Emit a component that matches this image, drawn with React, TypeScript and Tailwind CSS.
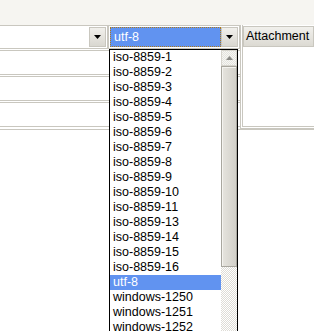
const charsets = [
  "iso-8859-1",
  "iso-8859-2",
  "iso-8859-3",
  "iso-8859-4",
  "iso-8859-5",
  "iso-8859-6",
  "iso-8859-7",
  "iso-8859-8",
  "iso-8859-9",
  "iso-8859-10",
  "iso-8859-11",
  "iso-8859-13",
  "iso-8859-14",
  "iso-8859-15",
  "iso-8859-16",
  "utf-8",
  "windows-1250",
  "windows-1251",
  "windows-1252",
];

function Arrow({ up = false, color = "#000" }: { up?: boolean; color?: string }) {
  return (
    <svg width="7" height="4" viewBox="0 0 7 4" className={up ? "rotate-180" : ""}>
      <path d="M0 0h7L3.5 4z" fill={color} />
    </svg>
  );
}

function DropButton() {
  return (
    <div className="flex w-[17px] items-center justify-center border border-[#c9c7bf] bg-gradient-to-b from-[#f1f0ec] to-[#d9d7d0]">
      <Arrow />
    </div>
  );
}

export default function App() {
  return (
    <div
      className="relative h-[331px] w-[314px] overflow-hidden bg-white text-[12.5px] text-black"
      style={{ fontFamily: '"Liberation Sans", Arial, sans-serif' }}
    >
      <div className="h-[25px] bg-[#f6f5f1]" />

      <div className="flex">
        {/* form fields */}
        <div className="flex w-[240px] flex-col gap-px">
          <div className="flex h-[24px]">
            <div className="flex w-[108px] border border-l-0 border-[#c9c7bf] p-px">
              <div className="flex-1 bg-white" />
              <DropButton />
            </div>
            <div className="flex w-[132px] border border-[#c9c7bf] p-px">
              <div className="flex flex-1 items-center border border-dotted border-[#b07a1a] bg-[#6193f0] pl-[3px] leading-none text-white">
                utf-8
              </div>
              <DropButton />
            </div>
          </div>
          <div className="h-[25px] border-y border-[#c9c7bf]" />
          <div className="h-[25px] border-y border-[#c9c7bf]" />
          <div className="h-[25px] border-y border-[#c9c7bf]" />
        </div>

        {/* attachment box */}
        <div className="flex h-[104px] flex-1 flex-col border-b-[3px] border-l-[3px] border-double border-[#c9c7bf] pt-px">
          <div className="flex h-[21px] items-center border border-[#c9c7bf] bg-gradient-to-b from-[#f1f0ec] to-[#dcdad3] pl-[2px]">
            Attachment
          </div>
        </div>
      </div>

      <div className="border-t border-[#c9c7bf]" />

      {/* open charset popup */}
      <div className="absolute left-[109px] top-[49px] flex h-[300px] w-[129px] border border-black bg-white">
        <div className="flex flex-1 flex-col">
          {charsets.map((c) => (
            <div
              key={c}
              className={
                "flex h-[15px] shrink-0 items-center pl-[3px] leading-none " +
                (c === "utf-8" ? "bg-[#6193f0] text-white" : "")
              }
            >
              {c}
            </div>
          ))}
        </div>
        <div className="flex w-[16px] flex-col">
          <div className="flex h-[16px] items-center justify-center border border-[#d6d4cd] bg-[repeating-conic-gradient(#e4e3de_0%_25%,#f6f6f3_0%_50%)] bg-size-[2px_2px]">
            <Arrow up color="#8a8a86" />
          </div>
          <div className="h-[201px] border border-[#a9a79f] bg-gradient-to-r from-[#e6e4de] to-[#d2d0c9] shadow-[inset_1px_1px_0_#f4f3ef]" />
          <div className="flex-1 bg-[repeating-conic-gradient(#dedcd6_0%_25%,#ffffff_0%_50%)] bg-size-[2px_2px]" />
        </div>
      </div>
    </div>
  );
}
